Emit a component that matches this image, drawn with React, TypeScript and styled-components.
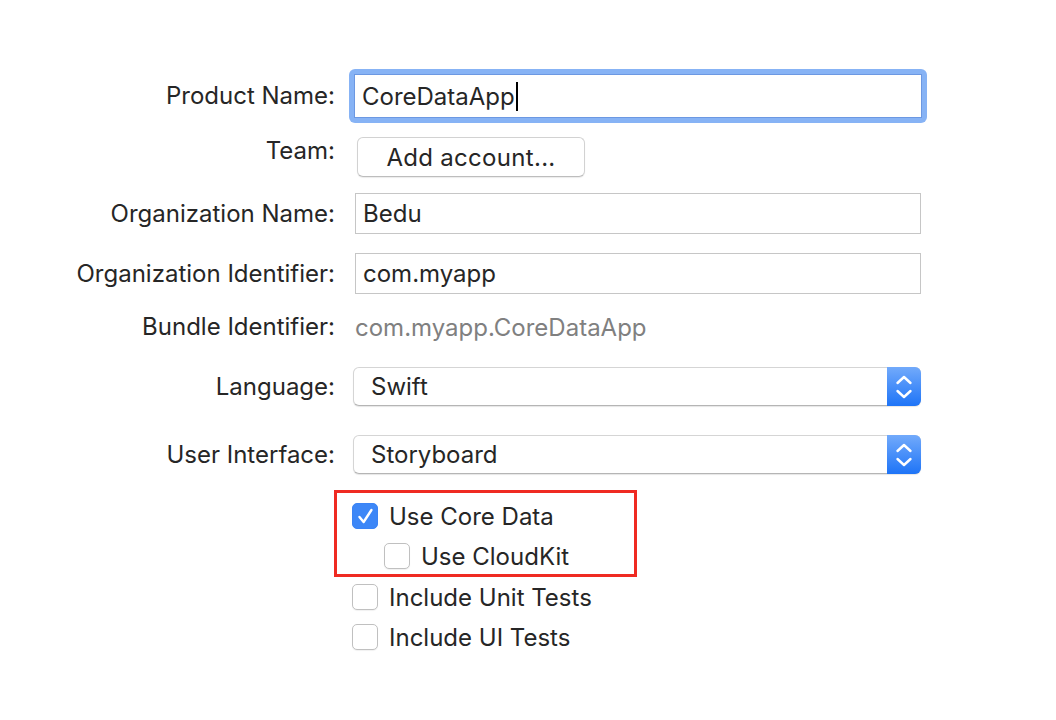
import React from 'react'
import styled, { createGlobalStyle } from 'styled-components'

const GlobalStyle = createGlobalStyle`
html, body {
    margin: 0;
    padding: 0;
    background: #ffffff;
}
body {
    font-family: Inter, "Noto Sans", "Liberation Sans", sans-serif;
    color: #262626;
}
`

const Page = styled.div`
width: 1056px;
height: 720px;
padding-top: 69px;
box-sizing: border-box;
`

const Row = styled.div<{ $h: number; $mt?: number }>`
display: grid;
grid-template-columns: 335px 566px;
column-gap: 20px;
align-items: center;
height: ${p => p.$h}px;
margin-top: ${p => p.$mt ?? 0}px;
`

const Label = styled.div<{ $top?: boolean }>`
text-align: right;
font-size: 24px;
line-height: 28px;
white-space: nowrap;
align-self: ${p => (p.$top ? 'start' : 'center')};
`

const FocusRing = styled.div`
padding: 5px;
margin-left: -6px;
margin-right: -6px;
background: #87b3f5;
border-radius: 6px;
`

const TextField = styled.div<{ $focused?: boolean }>`
display: flex;
align-items: center;
height: ${p => (p.$focused ? 44 : 41)}px;
box-sizing: border-box;
border: 1px solid ${p => (p.$focused ? '#6c98e2' : '#c6c6c6')};
background: #ffffff;
padding-left: 7px;
font-size: 24px;
`

const Caret = styled.span`
display: inline-block;
width: 2px;
height: 29px;
background: #000000;
margin-left: 1px;
`

const PushButton = styled.div`
display: flex;
align-items: center;
justify-content: center;
width: 228px;
height: 40px;
margin-left: 2px;
box-sizing: border-box;
border: 1px solid #d2d2d2;
border-bottom-color: #bdbdbd;
border-radius: 6px;
background: #ffffff;
box-shadow: 0 1px 1px rgba(0, 0, 0, 0.08);
font-size: 24px;
letter-spacing: 0.3px;
`

const Value = styled.div`
font-size: 24px;
color: #808080;
`

const Popup = styled.div`
display: flex;
align-items: stretch;
height: 39px;
margin-left: -2px;
box-sizing: border-box;
border: 1px solid #d5d5d5;
border-bottom-color: #b5b5b5;
border-radius: 6px;
background: #ffffff;
box-shadow: 0 1px 1px rgba(0, 0, 0, 0.1);
`

const PopupText = styled.div`
flex: 1;
display: flex;
align-items: center;
padding-left: 17px;
font-size: 24px;
`

const Stepper = styled.div`
width: 34px;
margin: -1px -1px -1px 0;
display: flex;
align-items: center;
justify-content: center;
border-radius: 0 6px 6px 0;
background: linear-gradient(#72aafb, #1e74f7);
`

const Highlight = styled.div`
width: 303px;
height: 87px;
margin-left: -21px;
box-sizing: border-box;
border: 3px solid #ef2a22;
padding: 3px 0 0 15px;
`

const CheckRow = styled.div<{ $indent?: number }>`
display: flex;
align-items: center;
gap: 11px;
height: 40px;
margin-left: ${p => p.$indent ?? 0}px;
font-size: 24px;
`

const Box = styled.div<{ $checked?: boolean }>`
width: 26px;
height: 26px;
box-sizing: border-box;
border-radius: 5px;
border: 1px solid ${p => (p.$checked ? '#3b84f5' : '#c0c0c0')};
background: ${p => (p.$checked ? '#3d87f7' : '#ffffff')};
box-shadow: ${p => (p.$checked ? 'none' : '0 1px 1px rgba(0,0,0,0.06)')};
display: flex;
align-items: center;
justify-content: center;
`

const ChevronPair = () => (
    <svg width="18" height="26" viewBox="0 0 18 26" fill="none">
        <path d="M2.5 9 L9 3 L15.5 9" stroke="#ffffff" strokeWidth="2.4" strokeLinecap="round" strokeLinejoin="round" />
        <path d="M2.5 17 L9 23 L15.5 17" stroke="#ffffff" strokeWidth="2.4" strokeLinecap="round" strokeLinejoin="round" />
    </svg>
)

const Check = () => (
    <svg width="26" height="26" viewBox="0 0 26 26" fill="none">
        <path d="M7 14 L11.5 19.5 L20 6.5" stroke="#ffffff" strokeWidth="2.6" strokeLinecap="round" strokeLinejoin="round" />
    </svg>
)

const Checkbox: React.FC<{ label: string; checked?: boolean; indent?: number }> = ({ label, checked, indent }) => (
    <CheckRow $indent={indent}>
        <Box $checked={checked}>{checked && <Check />}</Box>
        <span>{label}</span>
    </CheckRow>
)

const PopupButton: React.FC<{ value: string }> = ({ value }) => (
    <Popup>
        <PopupText>{value}</PopupText>
        <Stepper>
            <ChevronPair />
        </Stepper>
    </Popup>
)

const App: React.FC = () => {
    return (
        <Page>
            <GlobalStyle />
            <Row $h={54}>
                <Label>Product Name:</Label>
                <FocusRing>
                    <TextField $focused>
                        CoreDataApp<Caret />
                    </TextField>
                </FocusRing>
            </Row>
            <Row $h={40} $mt={14}>
                <Label $top>Team:</Label>
                <PushButton>Add account...</PushButton>
            </Row>
            <Row $h={41} $mt={16}>
                <Label>Organization Name:</Label>
                <TextField>Bedu</TextField>
            </Row>
            <Row $h={41} $mt={19}>
                <Label>Organization Identifier:</Label>
                <TextField>com.myapp</TextField>
            </Row>
            <Row $h={40} $mt={13}>
                <Label>Bundle Identifier:</Label>
                <Value>com.myapp.CoreDataApp</Value>
            </Row>
            <Row $h={39} $mt={20}>
                <Label>Language:</Label>
                <PopupButton value="Swift" />
            </Row>
            <Row $h={38} $mt={29}>
                <Label>User Interface:</Label>
                <PopupButton value="Storyboard" />
            </Row>
            <Row $h={167} $mt={17}>
                <div />
                <div style={{ alignSelf: 'start' }}>
                    <Highlight>
                        <Checkbox label="Use Core Data" checked />
                        <Checkbox label="Use CloudKit" indent={32} />
                    </Highlight>
                    <Checkbox label="Include Unit Tests" indent={-3} />
                    <Checkbox label="Include UI Tests" indent={-3} />
                </div>
            </Row>
        </Page>
    )
}

export default App
